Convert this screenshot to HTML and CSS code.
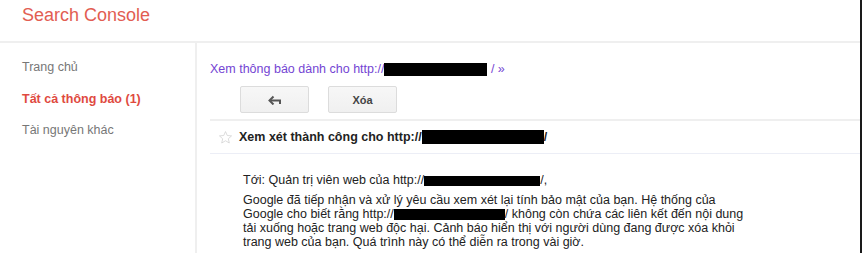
FILE: index.html
```html
<!DOCTYPE html>
<html lang="vi">
<head>
    <meta charset="UTF-8">
    <title>Search Console - Tất cả thông báo</title>
    <link rel="stylesheet" href="styles.css">
</head>
<body>
    <div class="page">
        <div class="topbar">
            <span class="brand">Search Console</span>
        </div>
        <div class="layout">
            <ul class="sidebar">
                <li>Trang chủ</li>
                <li class="active">Tất cả thông báo (1)</li>
                <li>Tài nguyên khác</li>
            </ul>
            <div class="main">
                <div class="site-link">Xem thông báo dành cho http://<span class="redact r-link"></span> / »</div>
                <div class="actions">
                    <button class="btn" title="Quay lại">
                        <svg width="14" height="10" viewBox="0 0 14 10"><path d="M12 9V5.5H3" fill="none" stroke="#555" stroke-width="2"/><path d="M5.5 1.5L1.5 5.5L5.5 9.5" fill="none" stroke="#555" stroke-width="2"/></svg>
                    </button>
                    <button class="btn">Xóa</button>
                </div>
                <div class="msg-head">
                    <svg class="star" width="15" height="15" viewBox="0 0 24 24"><path d="M12 2.5l2.8 6.3 6.9.6-5.2 4.6 1.6 6.8L12 17.2l-6.1 3.6 1.6-6.8-5.2-4.6 6.9-.6z" fill="none" stroke="#d0d0d0" stroke-width="1.2"/></svg>
                    <span class="msg-title">Xem xét thành công cho http://<span class="redact r-title"></span>/</span>
                </div>
                <div class="msg-body">
                    <p>Tới: Quản trị viên web của http://<span class="redact r-to"></span>/,</p>
                    <p>Google đã tiếp nhận và xử lý yêu cầu xem xét lại tính bảo mật của bạn. Hệ thống của<br>
                    Google cho biết rằng http://<span class="redact r-body"></span>/ không còn chứa các liên kết đến nội dung<br>
                    tải xuống hoặc trang web độc hại. Cảnh báo hiển thị với người dùng đang được xóa khỏi<br>
                    trang web của bạn. Quá trình này có thể diễn ra trong vài giờ.</p>
                </div>
            </div>
        </div>
    </div>
</body>
</html>
```

FILE: styles.css
```css
html, body {
    margin: 0;
    padding: 0;
    background: #fff;
}
body {
    font-family: "Liberation Sans", Arial, sans-serif;
    font-size: 12.5px;
    color: #222;
}
.page {
    width: 860px;
    height: 253px;
    border-right: 2px solid #1a1a1a;
    overflow: hidden;
}
.topbar {
    height: 41px;
    border-bottom: 2px solid #efefef;
    padding-left: 22px;
}
.brand {
    display: inline-block;
    margin-top: 5px;
    font-size: 18px;
    color: #e25d52;
}
.layout {
    display: flex;
    height: 210px;
}
.sidebar {
    list-style: none;
    margin: 0;
    padding: 16px 0 0 22px;
    width: 173px;
    border-right: 2px solid #efefef;
    font-size: 12.5px;
    color: #777;
}
.sidebar li {
    height: 31.5px;
    line-height: 16px;
}
.sidebar .active {
    color: #e04a3f;
    font-weight: bold;
}
.main {
    flex: 1;
    padding-left: 13px;
}
.site-link {
    margin-top: 18px;
    height: 16px;
    line-height: 16px;
    color: #7445d3;
}
.redact {
    display: inline-block;
    background: #000;
    vertical-align: middle;
}
.r-link { width: 103px; height: 13px; }
.r-title { width: 122px; height: 14px; }
.r-to { width: 116px; height: 10px; }
.r-body { width: 111px; height: 11px; }
.actions {
    display: flex;
    gap: 19px;
    padding: 9px 0 6px 30px;
    border-bottom: 2px solid #efefef;
}
.btn {
    width: 69px;
    height: 27px;
    border: 1px solid #dcdcdc;
    border-radius: 2px;
    background: linear-gradient(#f7f7f7, #f0f0f0);
    font-family: "Liberation Sans", Arial, sans-serif;
    font-size: 11px;
    font-weight: bold;
    color: #444;
    display: flex;
    align-items: center;
    justify-content: center;
    padding: 0;
}
.msg-head {
    display: flex;
    align-items: center;
    gap: 6px;
    height: 32px;
    padding-left: 8px;
    border-bottom: 1px solid #eceef6;
}
.msg-title {
    font-weight: bold;
    color: #222;
}
.msg-body {
    padding: 19px 0 0 33px;
    height: 100px;
}
.msg-body p {
    margin: 0 0 6px;
    line-height: 14px;
    color: #222;
}
```
